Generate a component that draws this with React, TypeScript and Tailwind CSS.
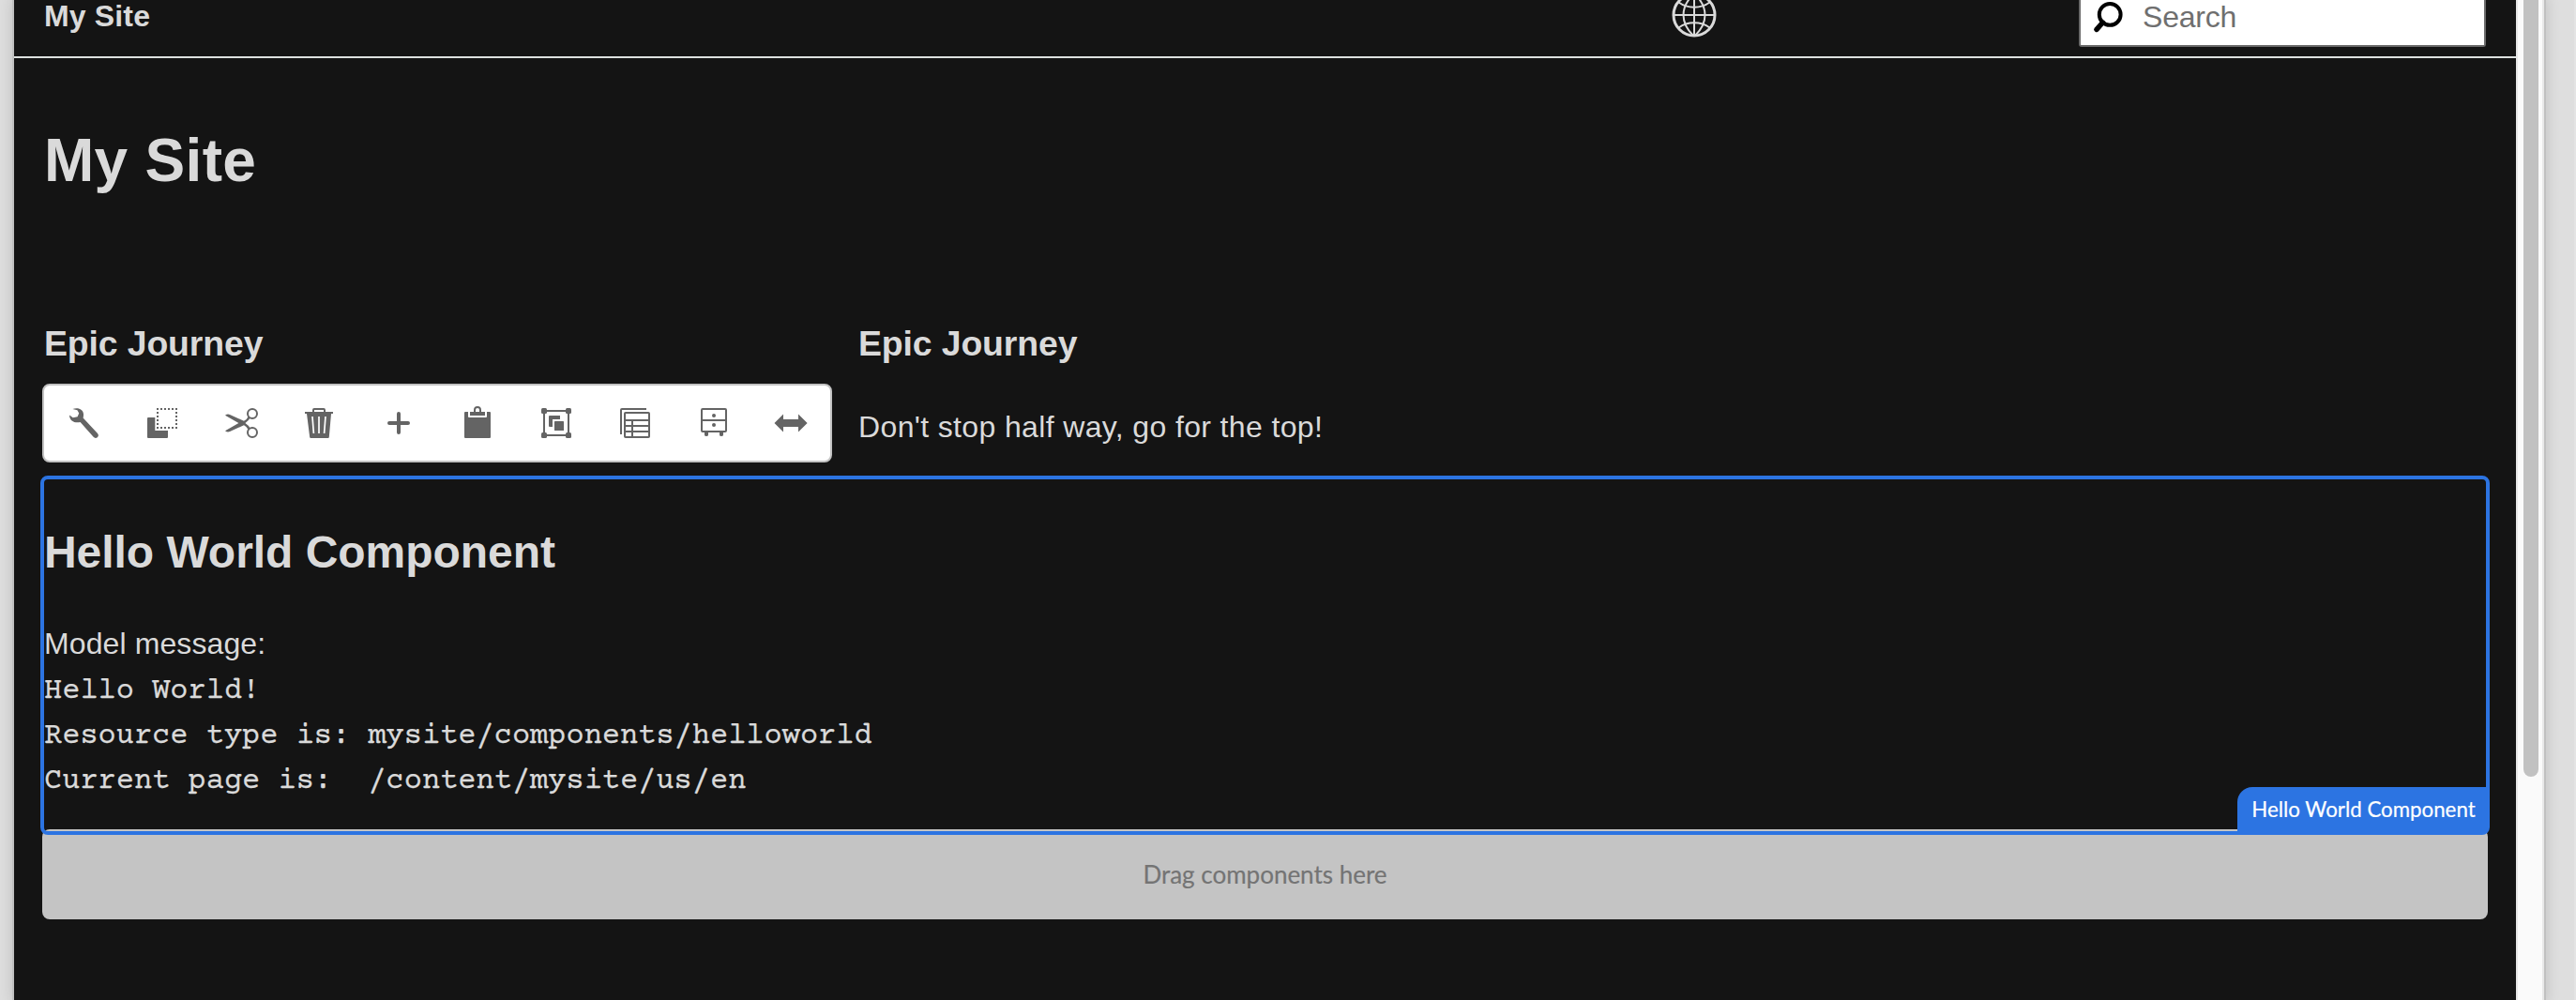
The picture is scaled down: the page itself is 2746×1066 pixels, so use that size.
import type { ReactNode } from "react";

function Icon({ children }: { children: ReactNode }) {
  return (
    <svg width="36" height="36" viewBox="0 0 36 36" fill="#646464" className="block overflow-visible">
      {children}
    </svg>
  );
}

const actions: { label: string; icon: ReactNode }[] = [
  {
    label: "Configure",
    icon: (
      <path d="M6.4 3.1 C12.5 .9 17.6 3.6 18 8.4 C18.1 10.2 17.9 11.4 17.6 12.5 L33 29 C34.4 30.8 34 32.2 32.8 33.2 C31.5 34.3 29.8 34.2 28.6 32.8 L14.6 16.9 C9.4 18.4 3.2 16.2 3 9.4 L6.8 12.2 L11.6 11.2 L13.2 7.4 L11.4 4.2 Z" />
    ),
  },
  {
    label: "Copy",
    icon: (
      <>
        <path d="M3 12 H10.3 V26 H24 V33 Q24 34 23 34 H3 Q2 34 2 33 V13 Q2 12 3 12 Z" />
        <path
          d="M12 3 H34 M12 23 H34 M13 2 V24 M33 2 V24"
          fill="none"
          stroke="#646464"
          strokeWidth="2"
          strokeDasharray="2 2"
        />
      </>
    ),
  },
  {
    label: "Cut",
    icon: (
      <>
        <g fill="none" stroke="#646464" strokeWidth="2">
          <circle cx="30" cy="8" r="5" />
          <circle cx="30" cy="28" r="5" />
        </g>
        <path d="M1 9.8 Q3.5 7.8 6 9 L21 15.7 Q24.6 13.8 25.6 11 L27.6 12.6 Q26.4 15.2 22.4 18 Q26.4 20.8 27.6 23.4 L25.6 25 Q24.6 22.2 21 20.3 L6 27 Q3.5 28.2 1 26.2 L15.4 18 Z" />
      </>
    ),
  },
  {
    label: "Delete",
    icon: (
      <>
        <path d="M11 6 V4 Q11 3 12 3 H22 Q23 3 23 4 V6" fill="none" stroke="#646464" strokeWidth="2" />
        <path d="M2 6 H32 V8 H30 L27.8 33 Q27.7 34 26.7 34 H8.3 Q7.3 34 7.2 33 L4 8 H2 Z" />
        <path d="M10 11 L11.4 29 M17 11 V29 M24 11 L22.6 29" stroke="#fff" strokeWidth="1.7" />
      </>
    ),
  },
  {
    label: "Insert",
    icon: <path d="M18 8 V28 M8 18 H28" stroke="#646464" strokeWidth="4" strokeLinecap="round" />,
  },
  {
    label: "Paste",
    icon: (
      <>
        <path d="M5 6 H8 V11 Q8 12 9 12 H27 Q28 12 28 11 V6 H31 Q32 6 32 7 V33 Q32 34 31 34 H5 Q4 34 4 33 V7 Q4 6 5 6 Z" />
        <path d="M10 6 H14 V4 A4 4 0 0 1 22 4 V6 H26 V10 H10 Z M16 6 H20 V4 A2 2 0 0 0 16 4 Z" fillRule="evenodd" />
      </>
    ),
  },
  {
    label: "Group",
    icon: (
      <>
        <rect x="5" y="5" width="26" height="26" fill="none" stroke="#646464" strokeWidth="2" />
        <rect x="2" y="2" width="6" height="6" rx="1.5" />
        <rect x="28" y="2" width="6" height="6" rx="1.5" />
        <rect x="2" y="28" width="6" height="6" rx="1.5" />
        <rect x="28" y="28" width="6" height="6" rx="1.5" />
        <path d="M11 10 H22 V14 H14 V22 H11 Q10 22 10 21 V11 Q10 10 11 10 Z" />
        <rect x="16" y="16" width="10" height="10" rx=".6" />
      </>
    ),
  },
  {
    label: "Layers",
    icon: (
      <g fill="none" stroke="#646464" strokeWidth="2">
        <path d="M3 30 V4 Q3 3 4 3 H30" />
        <rect x="7" y="7" width="26" height="26" rx=".8" />
        <path d="M7 15 H33 M7 21 H33 M7 27 H33 M15 15 V33" />
      </g>
    ),
  },
  {
    label: "Drawer",
    icon: (
      <>
        <path
          d="M6 3 H30 Q31 3 31 4 V26 Q31 27 30 27 H6 Q5 27 5 26 V4 Q5 3 6 3 Z M5 15 H31"
          fill="none"
          stroke="#646464"
          strokeWidth="2"
        />
        <circle cx="18" cy="10" r="2" />
        <circle cx="18" cy="20" r="2" />
        <path d="M8 27 H12 V30.5 Q12 32 10 32 Q8 32 8 30.5 Z M24 27 H28 V30.5 Q28 32 26 32 Q24 32 24 30.5 Z" />
      </>
    ),
  },
  {
    label: "Layout",
    icon: <path d="M-.5 18 L9 8.6 V14 H25 V8.6 L34.6 18 L25 27.4 V22 H9 V27.4 Z" />,
  },
];

function Globe() {
  return (
    <svg width="48" height="48" viewBox="0 0 48 48" fill="none" stroke="#dadada" strokeWidth="2" className="block">
      <circle cx="24" cy="24" r="22" strokeWidth="3" />
      <path d="M24 2 V46 M2 24 H46" />
      <path d="M23 2 C9 16 9 32 23 46 M25 2 C39 16 39 32 25 46" />
      <path d="M7.5 10.5 C17 17.5 31 17.5 40.5 10.5 M7.5 37.5 C17 30.5 31 30.5 40.5 37.5" />
    </svg>
  );
}

function Header() {
  return (
    <header className="flex h-[62px] items-start border-b-2 border-[#dce0de] pr-8 pl-8">
      <div className="-mt-px w-[1735px] text-[32px] leading-[36px] font-bold tracking-[0.15px]">My Site</div>
      <div className="-mt-2">
        <Globe />
      </div>
      <div className="ml-auto flex h-[50px] w-[434px] items-start rounded-b-[3px] border-2 border-t-0 border-[#6b6b6b] bg-white pl-[14px]">
        <svg width="34" height="36" viewBox="0 0 34 36" fill="none" stroke="#000" className="block">
          <circle cx="17.2" cy="15.4" r="11.4" strokeWidth="4" />
          <path d="M9.5 24 L3 31.4" strokeWidth="5.4" strokeLinecap="round" />
        </svg>
        <span className="ml-[18px] text-[32px] leading-[36px] tracking-[-0.2px] text-[#6f6f6f]">Search</span>
      </div>
    </header>
  );
}

function Toolbar() {
  return (
    <div className="flex h-[84px] w-[842px] items-center rounded-lg border-2 border-[#c2c2c2] bg-white">
      {actions.map((a) => (
        <button
          key={a.label}
          aria-label={a.label}
          className="flex h-full w-[84px] shrink-0 items-center justify-center last:w-[82px]"
        >
          <Icon>{a.icon}</Icon>
        </button>
      ))}
    </div>
  );
}

export default function App() {
  return (
    <div className="flex h-[1066px] w-[2746px] overflow-hidden border-r-2 border-[#e4e4e4] bg-[#dedede] pl-[15px] font-['Liberation_Sans',Arial,sans-serif] text-[#dadada]">
      <div className="flex shadow-[0_0_0_2px_#c0c0c0,0_0_14px_3px_rgba(0,0,0,0.12)]">
        <main className="h-[1066px] w-[2667px] bg-[#141414]">
          <Header />
          <h1 className="mt-[73px] ml-8 text-[64px] leading-[73px] font-bold tracking-[0.3px]">My Site</h1>
          <section className="mt-[137px] ml-[30px] flex">
            <div className="w-[869px]">
              <h3 className="ml-0.5 text-[37.44px] leading-[42px] font-bold tracking-[-0.14px]">Epic Journey</h3>
              <div className="mt-[22px]">
                <Toolbar />
              </div>
            </div>
            <div className="ml-px">
              <h3 className="text-[37.44px] leading-[42px] font-bold tracking-[-0.14px]">Epic Journey</h3>
              <p className="mt-[50px] text-[32px] leading-[36px] tracking-[0.36px]">Don't stop half way, go for the top!</p>
            </div>
          </section>
          <section className="relative z-10 mt-[14px] ml-7 h-[383px] w-[2611px] rounded-lg border-4 border-[#2c74e2]">
            <h2 className="mt-[50px] text-[48px] leading-[55px] font-bold tracking-[-0.04px]">Hello World Component</h2>
            <p className="mt-[46px] text-[32px] leading-[48px] tracking-[0.1px]">Model message:</p>
            <pre className="mt-[3px] font-['Courier_Prime','Nimbus_Mono_PS',Courier,'Liberation_Mono',monospace] text-[32px] leading-[48px] [-webkit-text-stroke:0.25px_#dadada]">
              {"Hello World!\nResource type is: mysite/components/helloworld\nCurrent page is:  /content/mysite/us/en"}
            </pre>
            <div className="absolute right-0 bottom-0 flex h-[47px] w-[265px] items-center justify-center rounded-tl-2xl bg-[#2c74e2] pt-px pl-1 font-[Lato,sans-serif] text-[22.3px] text-white [-webkit-text-stroke:0.2px_#fff]">
              Hello World Component
            </div>
          </section>
          <div className="-mt-1.5 ml-[30px] flex h-24 w-[2607px] items-center justify-center rounded-lg bg-[#c4c4c4] font-[Lato,sans-serif] text-[26px] text-[#747474] [-webkit-text-stroke:0.2px_#747474]">
            Drag components here
          </div>
        </main>
        <aside className="w-[30px] border-x-2 border-[#e8e8e8] bg-[#fafafa] pl-1.5">
          <div className="h-[828px] w-4 rounded-b-full bg-[#c1c1c1]" />
        </aside>
      </div>
    </div>
  );
}
